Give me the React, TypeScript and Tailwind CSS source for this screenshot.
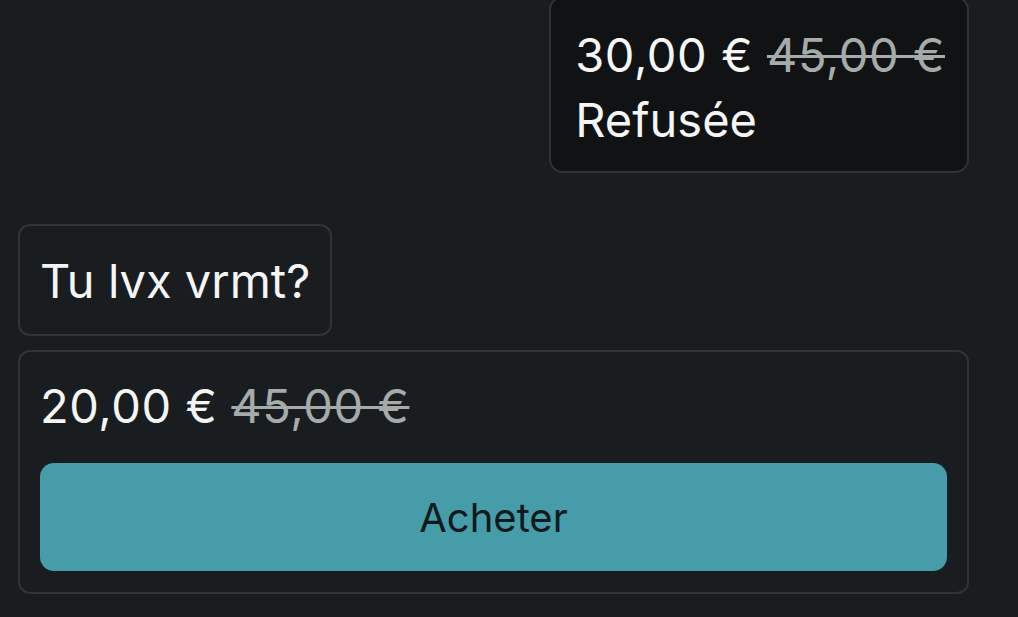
import React from "react";

const font = { fontFamily: "Inter, 'Noto Sans', sans-serif" };

const Price = ({ now, was }: { now: string; was: string }) => (
  <div className="whitespace-nowrap tracking-[0.6px]">
    <span className="text-[#f4f5f5]">{now}</span>{" "}
    <span className="text-[#a4abaa] line-through decoration-[3px] decoration-[#a4abaa]">{was}</span>
  </div>
);

export default function App() {
  return (
    <div
      className="h-[617px] w-[1018px] overflow-hidden bg-[#1a1d1f] pl-[18px] pr-[49px] text-[47px] leading-[65px] text-[#f4f5f5]"
      style={font}
    >
      <div className="flex flex-col">
        {/* sent offer */}
        <div className="-mt-[4px] self-end rounded-[14px] border-2 border-[#303335] bg-[#101214] pl-[24px] pr-[22px] pt-[24px] pb-[19px]">
          <Price now="30,00 €" was="45,00 €" />
          <div>Refusée</div>
        </div>

        {/* received message */}
        <div className="mt-[51px] self-start rounded-[12px] border-2 border-[#313436] px-[20px] pt-[22px] pb-[21px]">
          Tu lvx vrmt?
        </div>

        {/* counter offer */}
        <div className="mt-[14px] rounded-[12px] border-2 border-[#313436] px-[20px] pt-[21px] pb-[21px]">
          <Price now="20,00 €" was="45,00 €" />
          <button className="mt-[25px] flex h-[108px] w-full items-center justify-center rounded-[14px] bg-[#469ca9] text-[40px] text-[#0f1a1c]">
            Acheter
          </button>
        </div>
      </div>
    </div>
  );
}
